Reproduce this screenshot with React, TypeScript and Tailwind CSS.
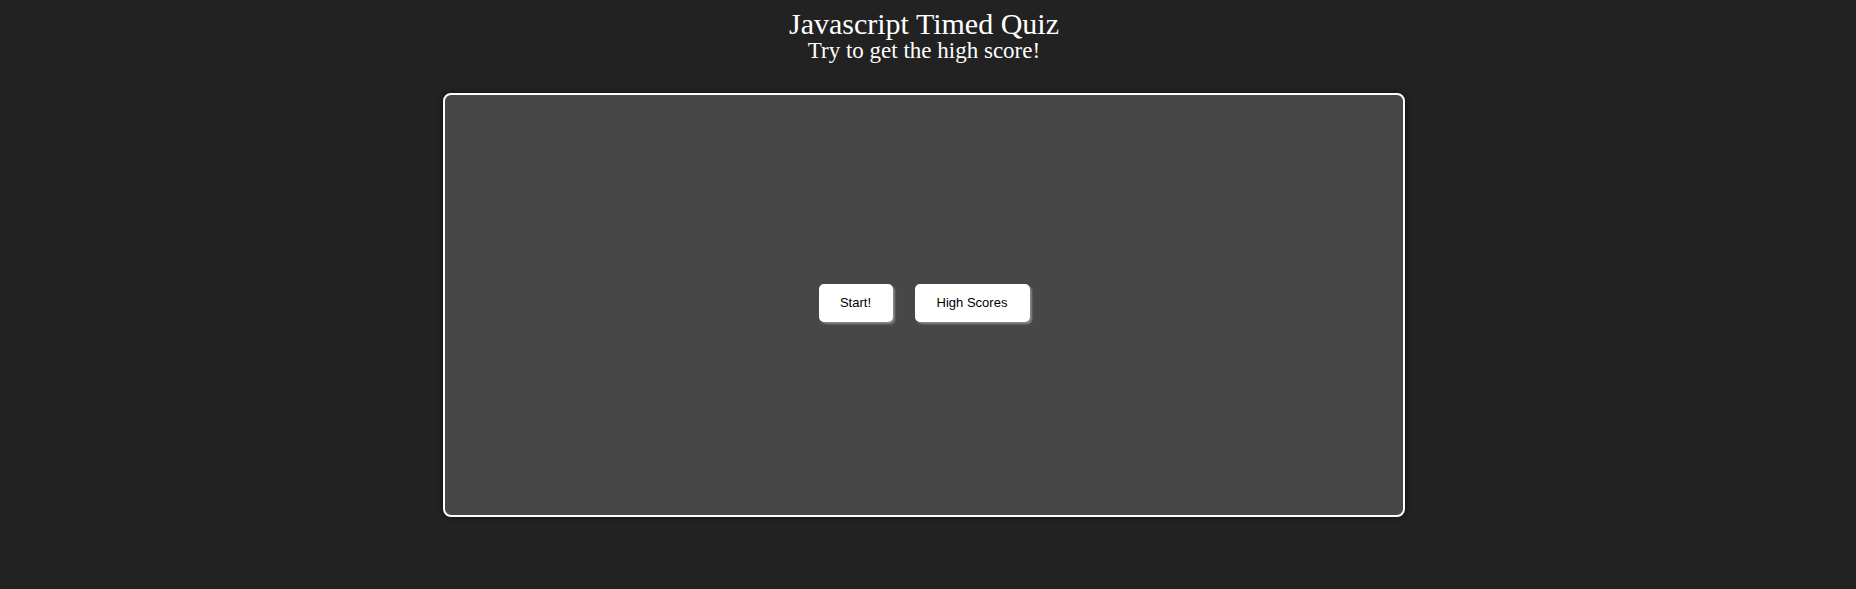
export default function App() {
  return (
    <div className="min-h-[589px] w-full bg-[#222222] pr-[8px]" style={{ fontFamily: '"Liberation Serif", serif' }}>
      <div className="flex flex-col items-center pt-[9px]">
        <h1 className="text-[30px] leading-[30px] text-white">Javascript Timed Quiz</h1>
        <h2 className="text-[23px] leading-[24px] text-white">Try to get the high score!</h2>
        <div className="mt-[30px] flex h-[424px] w-[962px] items-center justify-center gap-[22px] rounded-[8px] border-2 border-white bg-[#474747] pb-[5px] shadow-[0_0_6px_rgba(0,0,0,0.6)]">
          <button className="h-[38px] w-[74px] rounded-[5px] bg-white text-[13px] text-black shadow-[2px_2px_2px_#888]" style={{ fontFamily: '"Liberation Sans", Arial, sans-serif' }}>Start!</button>
          <button className="h-[38px] w-[115px] rounded-[5px] bg-white text-[13px] text-black shadow-[2px_2px_2px_#888]" style={{ fontFamily: '"Liberation Sans", Arial, sans-serif' }}>High Scores</button>
        </div>
      </div>
    </div>
  );
}
